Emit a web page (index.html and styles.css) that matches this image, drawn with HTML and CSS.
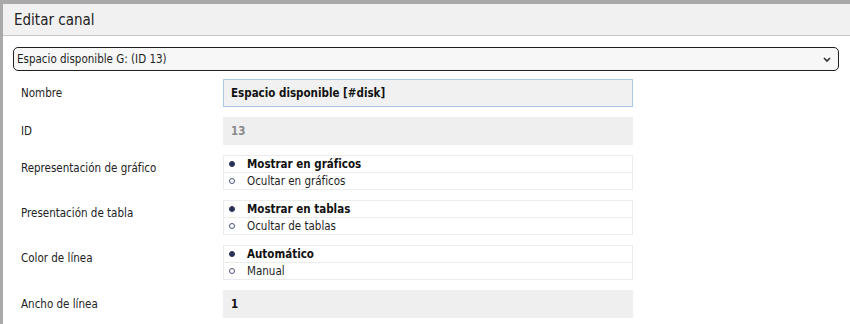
FILE: index.html
```html
<!DOCTYPE html>
<html lang="es">
<head>
<meta charset="utf-8">
<title>Editar canal</title>
<link rel="stylesheet" href="styles.css">
</head>
<body>
<div class="dialog">
  <div class="header">Editar canal</div>
  <div class="content">
    <div class="select">
      <span class="select-text">Espacio disponible G: (ID 13)</span>
      <svg class="chevron" width="8" height="5" viewBox="0 0 8 5"><path d="M1 1 L4 4 L7 1" fill="none" stroke="#333" stroke-width="1.7"/></svg>
    </div>
    <div class="form">
      <div class="label">Nombre</div>
      <div class="field input">Espacio disponible [#disk]</div>

      <div class="label">ID</div>
      <div class="field readonly muted">13</div>

      <div class="label top">Representación de gráfico</div>
      <div class="radios">
        <div class="radio checked"><span class="dot"></span>Mostrar en gráficos</div>
        <div class="radio"><span class="dot"></span>Ocultar en gráficos</div>
      </div>

      <div class="label top">Presentación de tabla</div>
      <div class="radios">
        <div class="radio checked"><span class="dot"></span>Mostrar en tablas</div>
        <div class="radio"><span class="dot"></span>Ocultar de tablas</div>
      </div>

      <div class="label top">Color de línea</div>
      <div class="radios">
        <div class="radio checked"><span class="dot"></span>Automático</div>
        <div class="radio"><span class="dot"></span>Manual</div>
      </div>

      <div class="label">Ancho de línea</div>
      <div class="field readonly">1</div>
    </div>
  </div>
</div>
</body>
</html>
```
FILE: styles.css
```css
html, body {
  margin: 0;
  padding: 0;
  height: 100%;
}
body {
  background: #a9a9a9;
  font-family: "DejaVu Sans Condensed", "DejaVu Sans", sans-serif;
  color: #1e1e1e;
  overflow: hidden;
}
.dialog {
  margin: 4px 0 0 3px;
  background: #fff;
  height: 330px;
}
.header {
  height: 31px;
  background: #f1f1f1;
  border-bottom: 1px solid #c6c6c6;
  padding-left: 11px;
  display: flex;
  align-items: center;
  font-size: 15px;
  color: #222;
}
.content {
  padding: 11px 11px 0 10px;
}
.select {
  height: 22px;
  border: 1px solid #1f1f1f;
  border-radius: 5px;
  background: #f7f7f7;
  display: flex;
  align-items: center;
  justify-content: space-between;
  padding: 0 7px 0 3px;
  font-size: 11.5px;
}
.chevron {
  display: block;
}
.form {
  display: grid;
  grid-template-columns: 202px 410px;
  row-gap: 10px;
  margin-top: 8px;
  margin-left: 8px;
  font-size: 11.5px;
}
.label {
  display: flex;
  align-items: center;
  color: #222;
}
.label.top {
  align-self: start;
  height: 26px;
}
.field {
  height: 28px;
  box-sizing: border-box;
  display: flex;
  align-items: center;
  padding-left: 8px;
  font-weight: bold;
  background: #efefef;
  color: #111;
}
.input {
  border: 1px solid #a8c9ea;
  background: #f1f1f1;
  padding-left: 7px;
}
.muted {
  color: #8a8a8a;
}
.radios {
  border: 1px solid #ececec;
}
.radio {
  height: 16px;
  display: flex;
  align-items: center;
  padding-left: 5px;
}
.radio + .radio {
  border-top: 1px solid #ececec;
}
.dot {
  width: 6px;
  height: 6px;
  box-sizing: border-box;
  border-radius: 50%;
  border: 1.3px solid #4a5278;
  background: #fff;
  margin-right: 12px;
  flex: none;
}
.radio.checked {
  font-weight: bold;
  color: #111;
}
.radio.checked .dot {
  background: #2a3157;
  border-color: #2a3157;
}
```
